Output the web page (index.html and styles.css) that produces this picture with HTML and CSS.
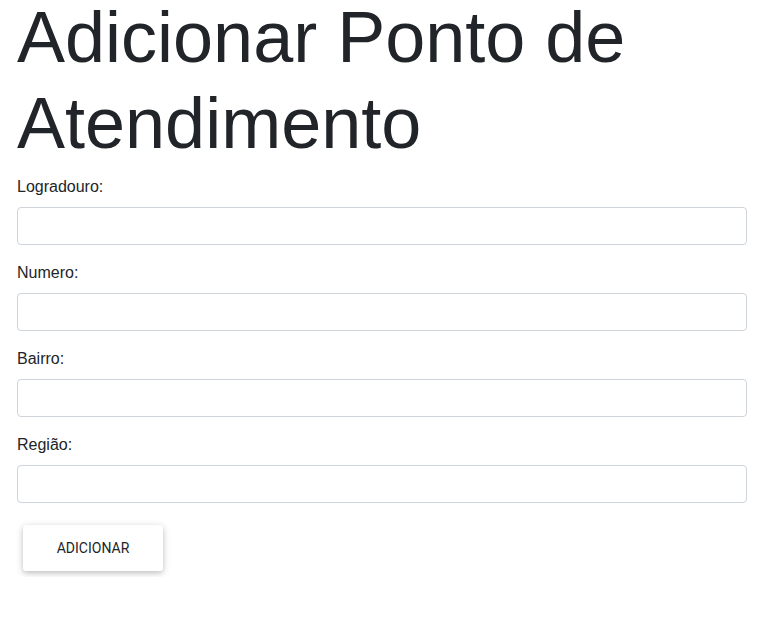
FILE: index.html
```html
<!DOCTYPE html>
<html lang="pt">
<head>
<meta charset="utf-8">
<title>Adicionar Ponto de Atendimento</title>
<link rel="stylesheet" href="styles.css">
</head>
<body>
<div class="container">
  <h1 class="title">Adicionar Ponto de Atendimento</h1>
  <form class="form">
    <div class="form-group">
      <label class="label" for="logradouro">Logradouro:</label>
      <input class="form-control" id="logradouro" type="text">
    </div>
    <div class="form-group">
      <label class="label" for="numero">Numero:</label>
      <input class="form-control" id="numero" type="text">
    </div>
    <div class="form-group">
      <label class="label" for="bairro">Bairro:</label>
      <input class="form-control" id="bairro" type="text">
    </div>
    <div class="form-group">
      <label class="label" for="regiao">Região:</label>
      <input class="form-control" id="regiao" type="text">
    </div>
    <button class="btn" type="button">ADICIONAR</button>
  </form>
</div>
</body>
</html>
```
FILE: styles.css
```css
html, body {
  margin: 0;
  padding: 0;
  background: #fff;
}
body {
  font-family: "Liberation Sans", Arial, sans-serif;
  font-size: 16px;
  line-height: 1.5;
  color: #212529;
}
.container {
  padding: 0 36px 0 17px;
}
.title {
  font-size: 72px;
  font-weight: 400;
  line-height: 1.2;
  margin: -6px 0 8px 0;
  color: #212529;
}
.form {
  display: flex;
  flex-direction: column;
  align-items: stretch;
}
.form-group {
  display: flex;
  flex-direction: column;
  margin-bottom: 16px;
}
.label {
  display: block;
  margin-bottom: 8px;
  line-height: 24px;
}
.form-control {
  box-sizing: border-box;
  height: 38px;
  width: 100%;
  border: 1px solid #ced4da;
  border-radius: 4px;
  padding: 6px 12px;
  font-size: 16px;
  font-family: inherit;
  background: #fff;
  margin: 0;
}
.btn {
  align-self: flex-start;
  box-sizing: border-box;
  width: 140px;
  height: 46px;
  margin: 6px;
  padding: 0;
  border: 0;
  border-radius: 3px;
  background: #fff;
  color: #212529;
  font-family: Roboto, "Liberation Sans", sans-serif;
  font-size: 14px;
  box-shadow: 0 2px 5px 0 rgba(0,0,0,0.16), 0 2px 10px 0 rgba(0,0,0,0.12);
}
```
